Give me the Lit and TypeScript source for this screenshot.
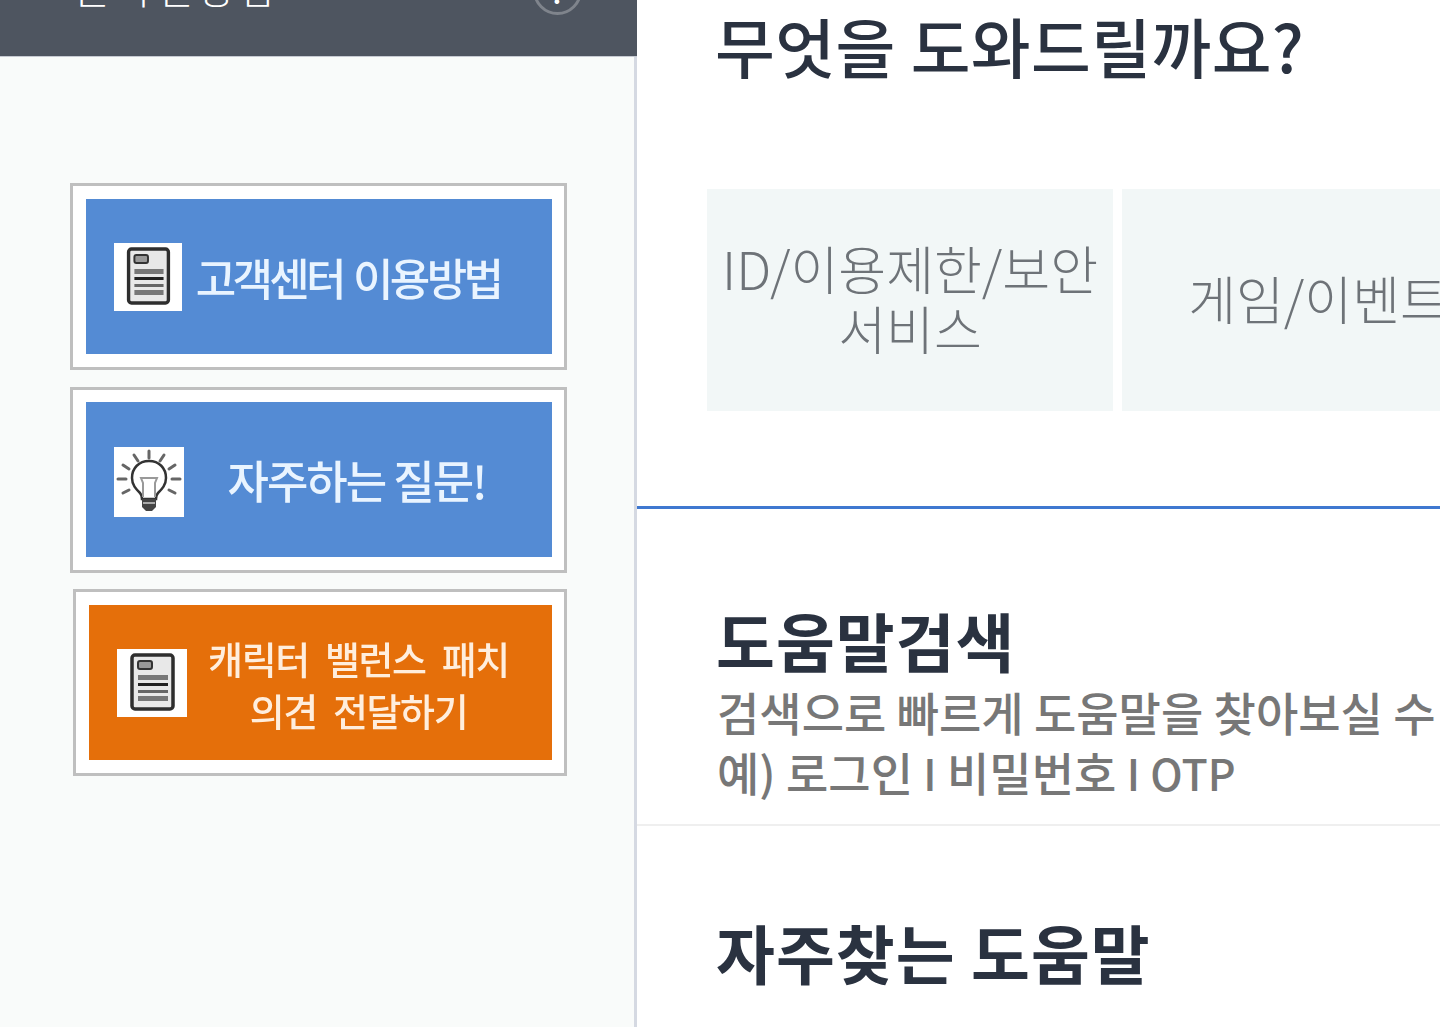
import { LitElement, html, css, svg } from "lit";
import { customElement } from "lit/decorators.js";

const docIcon = svg`<svg viewBox="0 0 70 68" width="100%" height="100%" preserveAspectRatio="none">
  <rect width="70" height="68" fill="#fff"/>
  <rect x="15" y="6" width="41" height="54" rx="3" fill="#e8e8e8" stroke="#2e2e2e" stroke-width="3.5"/>
  <rect x="21" y="12" width="14" height="8" rx="2" fill="#999" stroke="#333" stroke-width="2"/>
  <rect x="21" y="26" width="30" height="5" fill="#777"/>
  <rect x="21" y="34" width="30" height="3" fill="#222"/>
  <rect x="21" y="41" width="30" height="3" fill="#666"/>
  <rect x="21" y="47" width="30" height="5" fill="#777"/>
</svg>`;

const bulbIcon = svg`<svg viewBox="0 0 70 70" width="70" height="70">
  <rect width="70" height="70" fill="#fff"/>
  <g stroke="#666" stroke-width="3" stroke-linecap="round" fill="none">
    <path d="M35 4v7M20 8l4 6M50 8l-4 6M9 18l6 4M61 18l-6 4M4 32h8M58 32h8M9 46l6-3M61 46l-6-3"/>
  </g>
  <path d="M35 14c-10 0-17 7-17 17 0 7 4 11 8 15 2 2 2 4 2 6h14c0-2 0-4 2-6 4-4 8-8 8-15 0-10-7-17-17-17z" fill="#fff" stroke="#333" stroke-width="2.5"/>
  <path d="M29 50V36l-2-5h16l-2 5v14" fill="none" stroke="#999" stroke-width="2"/>
  <path d="M28 52h14v8l-4 4h-6l-4-4z" fill="#444"/>
  <path d="M29 56h12" stroke="#ccc" stroke-width="1.5"/>
</svg>`;

@customElement("app-root")
export class AppRoot extends LitElement {
  static styles = css`
    :host {
      display: block;
      width: 1440px;
      height: 1027px;
      overflow: hidden;
      font-family: "Noto Sans CJK KR", "Noto Sans", sans-serif;
      background: #fff;
    }
    .page { display: flex; height: 1027px; }
    .side {
      flex: none;
      width: 637px;
      box-sizing: border-box;
      background: #f9fbfa;
      border-right: 3px solid #d5d9e2;
      display: flex;
      flex-direction: column;
      align-items: flex-end;
    }
    .bar {
      flex: none;
      align-self: stretch;
      margin-right: -3px;
      height: 57px;
      box-sizing: border-box;
      background: #4e5560;
      border-bottom: 1px solid #c6cad2;
      display: flex;
      align-items: flex-end;
      justify-content: space-between;
      padding: 0 55px 41px 74px;
      overflow: hidden;
    }
    .bar-title {
      color: #fff;
      font-size: 40px;
      font-weight: 300;
      letter-spacing: 4.5px;
      line-height: 46px;
      margin-bottom: 5px;
      white-space: nowrap;
    }
    .bar-circle {
      flex: none;
      width: 49px;
      height: 49px;
      box-sizing: border-box;
      border: 3px solid #7f848c;
      border-radius: 50%;
      display: flex;
      justify-content: center;
      align-items: center;
      color: #fff;
      font-size: 30px;
      font-weight: 500;
      line-height: 1;
    }
    .banners {
      display: flex;
      flex-direction: column;
      align-items: flex-end;
      gap: 16px;
      margin: 126px 67px 0 0;
    }
    .banner {
      box-sizing: border-box;
      width: 497px;
      height: 187px;
      border: 3px solid #bfbfbf;
      background: #fff;
      padding: 13px 12px 13px 13px;
      display: flex;
    }
    .banner.first { margin-bottom: 1px; }
    .banner.mid { height: 186px; padding-top: 12px; }
    .banner.narrow { width: 494px; }
    .fill {
      flex: 1;
      display: flex;
      align-items: center;
      background: #548bd4;
      padding-left: 28px;
    }
    .fill.orange { background: #e56f0a; }
    .icon { flex: none; display: flex; width: 70px; height: 68px; filter: blur(0.7px); }
    .icon.narrow { width: 68px; }
    .icon.bulb { height: 70px; margin-top: 4px; }
    .label {
      flex: 1;
      color: #e9f4ff;
      font-size: 44px;
      font-weight: 500;
      line-height: 52px;
      letter-spacing: -3.7px;
      word-spacing: 4px;
      text-align: center;
      white-space: nowrap;
      filter: blur(0.6px);
    }
    .label.a { padding-right: 38px; }
    .label.b { padding-right: 23px; font-size: 45px; letter-spacing: -2px; word-spacing: 0; }
    .label.c {
      padding: 2px 22px 0 0;
      font-size: 38px;
      letter-spacing: -1.4px;
      word-spacing: 9px;
      color: #ffeedd;
    }
    .main { flex: 1; min-width: 0; display: flex; flex-direction: column; }
    h1, h2, p { margin: 0; white-space: nowrap; color: #2a3240; }
    h1 {
      font-size: 65px;
      font-weight: 500;
      line-height: 80px;
      letter-spacing: 0.4px;
      margin: 5px 0 0 78px;
    }
    .cards {
      display: flex;
      gap: 9px;
      margin: 104px 0 0 70px;
    }
    .card {
      flex: none;
      width: 406px;
      height: 222px;
      padding-bottom: 4px;
      box-sizing: border-box;
      background: #f2f7f7;
      color: #6e7378;
      display: flex;
      align-items: center;
      justify-content: center;
      text-align: center;
      font-size: 52px;
      font-weight: 300;
      line-height: 60px;
    }
    .card.second { padding-right: 14px; }
    .rule { height: 3px; background: #3f78d0; margin-top: 95px; flex: none; }
    .help {
      border-bottom: 2px solid #efefef;
      padding: 88px 0 0 79px;
      height: 317px;
      box-sizing: border-box;
      flex: none;
    }
    h2 { font-size: 64px; font-weight: 700; line-height: 84px; letter-spacing: 1px; }
    .help p { color: #777; font-size: 46px; font-weight: 500; line-height: 60px; margin-left: 1px; }
    .latin { font-size: 43px; }
    .freq { margin: 83px 0 0 79px; }
  `;

  render() {
    return html`<div class="page">
      <aside class="side">
        <div class="bar">
          <span class="bar-title">온라인상담</span>
          <span class="bar-circle">?</span>
        </div>
        <div class="banners">
          <div class="banner first"><div class="fill"><span class="icon narrow">${docIcon}</span><div class="label a">고객센터 이용방법</div></div></div>
          <div class="banner mid"><div class="fill"><span class="icon bulb">${bulbIcon}</span><div class="label b">자주하는 질문!</div></div></div>
          <div class="banner narrow"><div class="fill orange"><span class="icon">${docIcon}</span><div class="label c">캐릭터 밸런스 패치<br />의견 전달하기</div></div></div>
        </div>
      </aside>
      <main class="main">
        <h1>무엇을 도와드릴까요?</h1>
        <div class="cards">
          <div class="card">ID/이용제한/보안<br />서비스</div>
          <div class="card second">게임/이벤트</div>
        </div>
        <div class="rule"></div>
        <section class="help">
          <h2>도움말검색</h2>
          <p>검색으로 빠르게 도움말을 찾아보실 수 있습니다.</p>
          <p>예) 로그인 <span class="latin">I</span> 비밀번호 <span class="latin">I</span> <span class="latin">OTP</span></p>
        </section>
        <h2 class="freq">자주찾는 도움말</h2>
      </main>
    </div>`;
  }
}
